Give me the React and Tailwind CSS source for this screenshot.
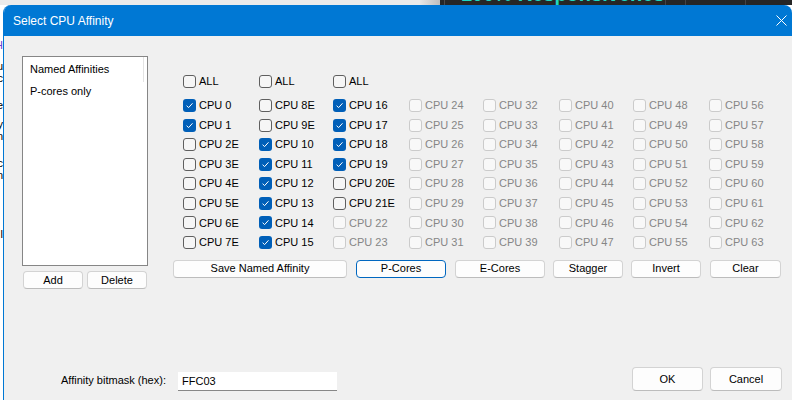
import React from 'react';

const COLS = ['w-[76px]', 'w-[74px]', 'w-[76px]', 'w-[74px]', 'w-[76px]', 'w-[74px]', 'w-[76px]', 'w-[74px]'];

function cpuCell(col, row) {
  const n = col * 8 + row;
  if (col === 0) return row < 2 ? { label: `CPU ${n}`, state: 'on' } : { label: `CPU ${n}E`, state: 'off' };
  if (col === 1) return row < 2 ? { label: `CPU ${n}E`, state: 'off' } : { label: `CPU ${n}`, state: 'on' };
  if (col === 2) {
    if (row < 4) return { label: `CPU ${n}`, state: 'on' };
    if (row < 6) return { label: `CPU ${n}E`, state: 'off' };
  }
  return { label: `CPU ${n}`, state: 'disabled' };
}

function Box({ state }) {
  if (state === 'on') {
    return (
      <span className="flex h-[13px] w-[13px] shrink-0 items-center justify-center rounded-[3px] bg-[#005fb8]">
        <svg width="9" height="9" viewBox="0 0 9 9">
          <path d="M1.6 4.7 L3.6 6.6 L7.5 2.3" stroke="white" strokeWidth="1" fill="none" />
        </svg>
      </span>
    );
  }
  if (state === 'disabled') {
    return <span className="h-[13px] w-[13px] shrink-0 rounded-[3px] border border-[#cbcbcb] bg-[#f8f8f8]" />;
  }
  return <span className="h-[13px] w-[13px] shrink-0 rounded-[3px] border border-[#5f5f5f] bg-[#f6f6f6]" />;
}

function Check({ state, label, width }) {
  return (
    <div className={`flex h-full items-center gap-[3px] ${width}`}>
      <Box state={state} />
      <span className={state === 'disabled' ? 'text-[#868686]' : 'text-black'}>{label}</span>
    </div>
  );
}

function Btn({ children, className = '', focused = false }) {
  return (
    <button
      type="button"
      className={`flex items-center justify-center rounded-[4px] border bg-[#fdfdfd] text-[11px] leading-none text-black ${
        focused ? 'border-[#0067c0]' : 'border-[#d3d3d3] border-b-[#bcbcbc]'
      } ${className}`}
    >
      {children}
    </button>
  );
}

// slivers of the window that sits behind the dialog, on its left
const SLIVERS = [
  { ch: 'H', top: 'mt-[0px]', color: 'text-[#6a40d0]' },
  { ch: 'u', top: 'mt-[10px]', color: 'text-black' },
  { ch: 'c', top: 'mt-[1px]', color: 'text-black' },
  { ch: 'e', top: 'mt-[16px]', color: 'text-black' },
  { ch: 'y', top: 'mt-[8px]', color: 'text-black' },
  { ch: 'n', top: 'mt-[1px]', color: 'text-black' },
  { ch: 'c', top: 'mt-[16px]', color: 'text-black' },
  { ch: 'n', top: 'mt-[1px]', color: 'text-black' },
  { ch: 'l', top: 'mt-[48px]', color: 'text-black' },
];

export default function App() {
  const rows = [0, 1, 2, 3, 4, 5, 6, 7];
  return (
    <div
      className="relative h-[400px] w-[792px] overflow-hidden bg-white text-[11px] text-black"
      style={{ fontFamily: '"Liberation Sans", Arial, sans-serif' }}
    >
      {/* windows behind the dialog */}
      <div className="absolute left-0 right-0 top-0 flex h-[5px] overflow-hidden">
        <div className="w-[420px] bg-[#ebebeb]" />
        <div className="w-[20px] bg-gradient-to-r from-[#e6e6e6] to-[#bdbdbd]" />
        <div className="flex flex-1 bg-[#262626]">
          <div className="w-[5px] border-r border-[#4a4a4a]" />
          <div className="w-[220px] overflow-hidden">
            <div className="-mt-[16px] whitespace-nowrap pl-[16px] text-[20px] font-semibold leading-none text-[#1fd8c0]">
              100% Responsiveness
            </div>
          </div>
          <div className="w-[20px] border-l border-[#444]" />
          <div className="w-[60px] border-l border-[#444]" />
          <div className="flex-1 border-l border-[#444]" />
        </div>
      </div>
      <div className="absolute left-0 top-[40px] flex w-[3px] flex-col overflow-hidden text-[11px] leading-[11px]">
        {SLIVERS.map((s, i) => (
          <div key={i} className={`flex h-[11px] w-[3px] justify-end overflow-hidden ${s.top} ${s.color}`}>
            {s.ch}
          </div>
        ))}
      </div>

      {/* dialog */}
      <div className="absolute left-[3px] top-[5px] flex h-[395px] w-[789px] flex-col overflow-hidden rounded-t-[8px] border-l border-[#0078d4] bg-[#f0f0f0]">
        <div className="flex h-[31px] shrink-0 items-center justify-between bg-[#0078d4] pl-[9px] pr-[5px] text-white">
          <span className="text-[12px]">Select CPU Affinity</span>
          <svg width="11" height="11" viewBox="0 0 11 11">
            <path d="M0.5 0.5 L10.5 10.5 M10.5 0.5 L0.5 10.5" stroke="white" strokeWidth="1" />
          </svg>
        </div>

        <div className="flex flex-1 flex-col">
          <div className="flex">
            {/* named affinities */}
            <div className="ml-[18px] mt-[20px] flex w-[126px] flex-col">
              <div className="h-[210px] border border-[#868686] bg-white">
                <div className="flex h-[25px] items-center">
                  <span className="w-[120px] pl-[7px]">Named Affinities</span>
                  <span className="h-[25px] border-l border-[#e3e3e3]" />
                </div>
                <div className="flex h-[18px] items-center pl-[7px]">P-cores only</div>
              </div>
              <div className="mt-[5px] flex gap-[4px] pl-[1px]">
                <Btn className="h-[18px] w-[60px]">Add</Btn>
                <Btn className="h-[18px] w-[60px]">Delete</Btn>
              </div>
            </div>

            {/* cpu grid */}
            <div className="ml-[25px] mt-[35.5px] flex flex-col">
              <div className="flex h-[20px] pl-[10px]">
                <Check state="off" label="ALL" width={COLS[0]} />
                <Check state="off" label="ALL" width={COLS[1]} />
                <Check state="off" label="ALL" width={COLS[2]} />
              </div>
              <div className="mt-[4.2px] flex flex-col pl-[10px]">
                {rows.map((row) => (
                  <div key={row} className="flex h-[19.57px]">
                    {COLS.map((w, col) => {
                      const c = cpuCell(col, row);
                      return <Check key={col} state={c.state} label={c.label} width={w} />;
                    })}
                  </div>
                ))}
              </div>
              <div className="mt-[7.7px] flex h-[18px]">
                <Btn className="h-[18px] w-[174px]">Save Named Affinity</Btn>
                <Btn className="ml-[9px] h-[18px] w-[90px]" focused>P-Cores</Btn>
                <Btn className="ml-[9px] h-[18px] w-[90px]">E-Cores</Btn>
                <Btn className="ml-[8px] h-[18px] w-[70px]">Stagger</Btn>
                <Btn className="ml-[8px] h-[18px] w-[70px]">Invert</Btn>
                <Btn className="ml-[9px] h-[18px] w-[71px]">Clear</Btn>
              </div>
            </div>
          </div>

          {/* bottom row */}
          <div className="mt-auto flex items-end pb-[9px] pl-[57px] pr-[10px]">
            <div className="mb-[1px] flex h-[19px] w-[117px] items-center">Affinity bitmask (hex):</div>
            <div className="flex h-[19px] w-[159px] items-center border-b border-[#878787] bg-white pl-[4px]">FFC03</div>
            <Btn className="ml-auto h-[24px] w-[71px]">OK</Btn>
            <Btn className="ml-[7px] h-[24px] w-[72px]">Cancel</Btn>
          </div>
        </div>
      </div>
    </div>
  );
}
